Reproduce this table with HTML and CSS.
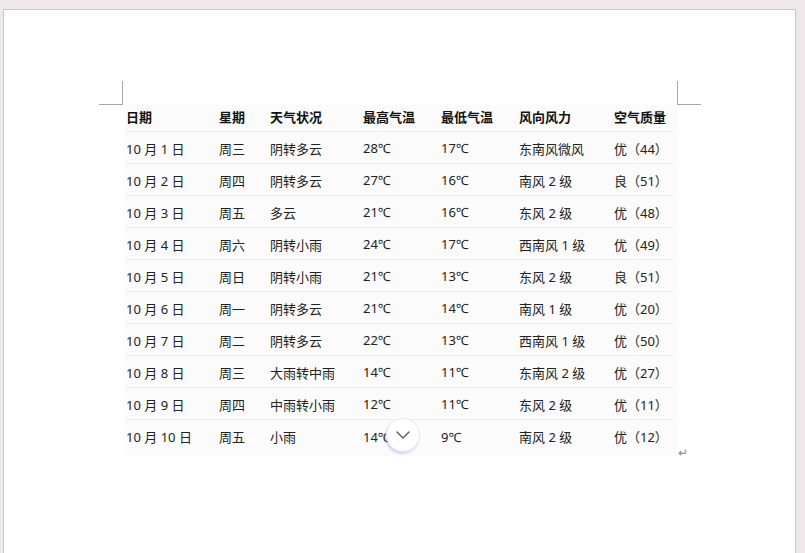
FILE: index.html
```html
<!DOCTYPE html>
<html lang="zh">
<head>
<meta charset="utf-8">
<title>天气</title>
<link rel="stylesheet" href="styles.css">
</head>
<body>
<div class="page">
  <div class="marks">
    <span class="mark mark-left"></span>
    <span class="mark mark-right"></span>
  </div>
  <div class="content">
    <div class="table">
      <div class="row head">
        <div>日期</div><div>星期</div><div>天气状况</div><div>最高气温</div><div>最低气温</div><div>风向风力</div><div>空气质量</div>
      </div>
      <div class="row"><div>10 月 1 日</div><div>周三</div><div>阴转多云</div><div>28℃</div><div>17℃</div><div>东南风微风</div><div>优（44）</div></div>
      <div class="row"><div>10 月 2 日</div><div>周四</div><div>阴转多云</div><div>27℃</div><div>16℃</div><div>南风 2 级</div><div>良（51）</div></div>
      <div class="row"><div>10 月 3 日</div><div>周五</div><div>多云</div><div>21℃</div><div>16℃</div><div>东风 2 级</div><div>优（48）</div></div>
      <div class="row"><div>10 月 4 日</div><div>周六</div><div>阴转小雨</div><div>24℃</div><div>17℃</div><div>西南风 1 级</div><div>优（49）</div></div>
      <div class="row"><div>10 月 5 日</div><div>周日</div><div>阴转小雨</div><div>21℃</div><div>13℃</div><div>东风 2 级</div><div>良（51）</div></div>
      <div class="row"><div>10 月 6 日</div><div>周一</div><div>阴转多云</div><div>21℃</div><div>14℃</div><div>南风 1 级</div><div>优（20）</div></div>
      <div class="row"><div>10 月 7 日</div><div>周二</div><div>阴转多云</div><div>22℃</div><div>13℃</div><div>西南风 1 级</div><div>优（50）</div></div>
      <div class="row"><div>10 月 8 日</div><div>周三</div><div>大雨转中雨</div><div>14℃</div><div>11℃</div><div>东南风 2 级</div><div>优（27）</div></div>
      <div class="row"><div>10 月 9 日</div><div>周四</div><div>中雨转小雨</div><div>12℃</div><div>11℃</div><div>东风 2 级</div><div>优（11）</div></div>
      <div class="row last"><div>10 月 10 日</div><div>周五</div><div>小雨</div><div>14℃</div><div>9℃</div><div>南风 2 级</div><div>优（12）</div></div>
    </div>
    <span class="para">↵</span>
  </div>
  <button class="scroll-btn" type="button" aria-label="向下">
    <svg width="14" height="8" viewBox="0 0 14 8"><path d="M1 1 L7 7 L13 1" fill="none" stroke="#555" stroke-width="1.3" stroke-linecap="round" stroke-linejoin="round"/></svg>
  </button>
</div>
</body>
</html>
```

FILE: styles.css
```css
html, body {
  margin: 0;
  padding: 0;
  height: 100%;
  overflow: hidden;
}
body {
  background: #efe8eb;
  font-family: "Noto Sans", "Noto Sans CJK SC", sans-serif;
  font-size: 13px;
  color: #222;
}
.page {
  position: relative;
  margin: 9px 0 0 3px;
  width: 793px;
  height: 560px;
  background: #fff;
  border: 1px solid #c9c6c7;
  box-sizing: border-box;
  padding-top: 71px;
}
.marks {
  display: flex;
  justify-content: space-between;
  margin-left: 95px;
  width: 602px;
  height: 24px;
}
.mark {
  display: block;
  width: 23px;
  height: 23px;
  border-bottom: 1px solid #a8a8a8;
}
.mark-left { border-right: 1px solid #a8a8a8; }
.mark-right { border-left: 1px solid #a8a8a8; }
.content {
  display: flex;
  align-items: flex-end;
  margin-left: 120px;
}
.table {
  width: 553px;
  background: #fbfbfb;
  padding: 0 4px 4px 2px;
  box-sizing: border-box;
}
.row {
  display: grid;
  grid-template-columns: 93px 51px 93px 78px 78px 95px 1fr;
  height: 32px;
  box-sizing: border-box;
  align-items: center;
  border-bottom: 1px solid #ececec;
  white-space: nowrap;
  padding-top: 1px;
}
.row.head {
  height: 27px;
  font-weight: 700;
  color: #111;
  padding: 0 0 3px;
}
.row.last { border-bottom: none; }
.para {
  font-size: 12px;
  color: #888;
  line-height: 12px;
  margin-bottom: -3px;
  margin-left: 1px;
}
.scroll-btn {
  position: absolute;
  left: 382px;
  top: 408px;
  width: 34px;
  height: 34px;
  border-radius: 50%;
  background: #fff;
  border: 1px solid #e3e9fb;
  box-shadow: -1px 2px 2px rgba(70, 110, 230, 0.25);
  display: flex;
  align-items: center;
  justify-content: center;
  padding: 0;
}
```
